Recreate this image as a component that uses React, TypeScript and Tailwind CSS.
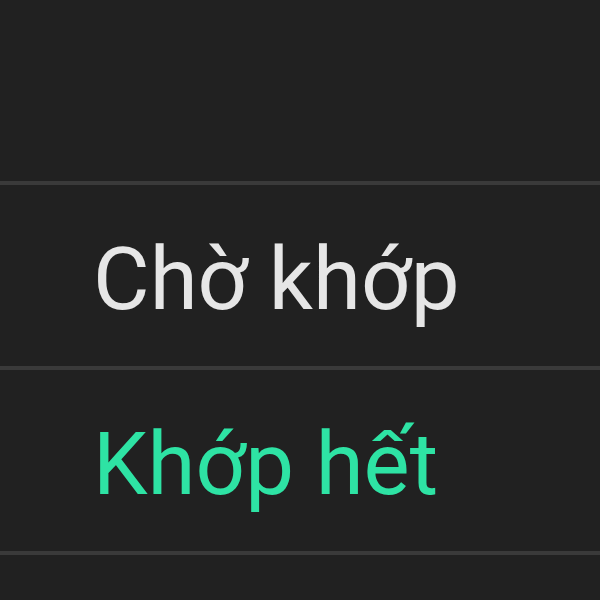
const App = () => {
  return (
    <div className="h-[600px] w-[600px] overflow-hidden bg-[#212121] font-['Roboto',sans-serif]">
      {/* Header area */}
      <div className="h-[185px] border-b-[4px] border-[#3a3a3a]"></div>

      {/* Order status rows */}
      <div className="flex h-[185px] items-center border-b-[4px] border-[#3a3a3a] pl-[93px] pt-[8px]">
        <span className="text-[87px] leading-none text-[#e6e6e6]">Chờ khớp</span>
      </div>
      <div className="flex h-[185px] items-center border-b-[4px] border-[#3a3a3a] pl-[93px] pt-[8px]">
        <span className="text-[87px] leading-none text-[#2ee3a4]">Khớp hết</span>
      </div>
    </div>
  );
};

export default App;
